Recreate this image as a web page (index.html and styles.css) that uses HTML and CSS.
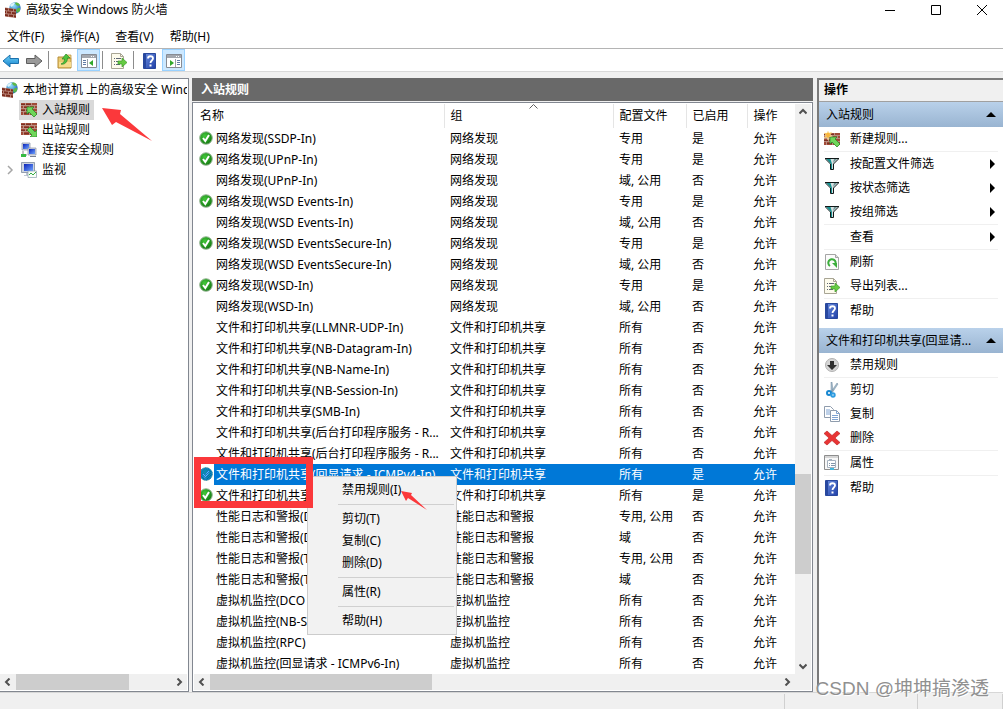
FILE: index.html
```html
<!DOCTYPE html>
<html lang="zh-CN">
<head>
<meta charset="utf-8">
<title>高级安全 Windows 防火墙</title>
<link rel="stylesheet" href="styles.css">
</head>
<body>
<svg class="defs" aria-hidden="true">
  <defs>
    <linearGradient id="g-blue" x1="0" y1="0" x2="0" y2="1"><stop offset="0" stop-color="#6fd0f5"/><stop offset="1" stop-color="#1583cf"/></linearGradient>
    <linearGradient id="g-help" x1="0" y1="0" x2="1" y2="1"><stop offset="0" stop-color="#6d90e0"/><stop offset="1" stop-color="#1f3fa8"/></linearGradient>
    <radialGradient id="g-green" cx=".4" cy=".35" r=".7"><stop offset="0" stop-color="#43c83a"/><stop offset="1" stop-color="#11750f"/></radialGradient>
    <radialGradient id="g-globe" cx=".4" cy=".3" r=".8"><stop offset="0" stop-color="#8fe0fb"/><stop offset="1" stop-color="#0b4fa5"/></radialGradient>
    <linearGradient id="g-screen" x1="0" y1="0" x2="1" y2="1"><stop offset="0" stop-color="#0a22b8"/><stop offset="1" stop-color="#6fa4ff"/></linearGradient>
    <symbol id="bricks" viewBox="0 0 16 12">
      <path fill="#b98d80" d="M0 0h16v12H0z"/>
      <path fill="#a04a38" d="M0 0h4v2H0zM5 0h5v2H5zM11 0h5v2h-5zM0 3h2v2H0zM3 3h5v2H3zM9 3h4v2H9zM14 3h2v2h-2zM0 6h4v2H0zM5 6h5v2H5zM11 6h5v2h-5zM0 9h2v3H0zM3 9h5v3H3zM9 9h4v3H9zM14 9h2v3h-2z"/>
      <path fill="#7d3023" d="M0 1h4v1H0zM5 1h5v1H5zM3 4h5v1H3zM9 4h4v1H9zM0 7h4v1H0zM5 7h5v1H5zM3 10h5v1H3z"/>
    </symbol>
    <symbol id="firewall" viewBox="0 0 16 16">
      <circle cx="10" cy="6" r="5.700" fill="url(#g-globe)"/>
      <path d="M10 1c2-1 4 0 5 2l-2 1-2-1zM13 6l2 0 0 3-3 2-1-3z" fill="#5cb848"/>
      <path d="M5 3l3-2 2 0-2 3-2 1z" fill="#dff5fb"/>
      <path fill="#b58074" d="M0 5.500l11 1.500v9L0 14.500z"/>
      <path fill="#7c2d1e" d="M0 6l3 .4v2L0 8zM4 6.500l4 .5v2l-4-.5zM9 7.200l2 .2v2l-2-.2zM0 9l1 .1v2L0 11zM2 9.200l4 .6v2l-4-.6zM7 10l4 .5v2L7 12zM0 12l3 .4v2L0 14zM4 12.500l4 .5v2l-4-.5zM9 13.200l2 .3v2l-2-.3z"/>
    </symbol>
    <symbol id="inbound" viewBox="0 0 16 14">
      <use href="#bricks" width="16" height="12"/>
      <path d="M6 4h7l-2 2 5 5-3 3-5-5-2 2z" fill="#6fd65a" stroke="#2f8c2d" stroke-width=".8"/>
    </symbol>
    <symbol id="outbound" viewBox="0 0 16 14">
      <use href="#bricks" width="16" height="12"/>
      <path d="M16 14H9l2-2-5-5 3-3 5 5 2-2z" fill="#6fd65a" stroke="#2f8c2d" stroke-width=".8"/>
    </symbol>
    <symbol id="newrule" viewBox="0 0 16 16">
      <svg y="2" width="16" height="14"><use href="#inbound"/></svg>
      <path d="M4 0l1 2 3-1-2 3 2 1-3 1-1 3-1-3-3 1 2-3-2-2 3 0z" fill="#f8b63c" stroke="#fff3c0" stroke-width=".5"/>
    </symbol>
    <symbol id="computers" viewBox="0 0 16 16">
      <path d="M1 1h8v7H1z" fill="#d4d8e2" stroke="#8790a3" stroke-width=".7"/><path d="M2 2h6v5H2z" fill="url(#g-screen)"/>
      <path d="M7 6h8v7H7z" fill="#d4d8e2" stroke="#8790a3" stroke-width=".7"/><path d="M8 7h6v5H8z" fill="url(#g-screen)"/>
      <path d="M9 14h6v1H9z" fill="#777f8e"/><path d="M2 9v4h4" stroke="#888" fill="none"/><path d="M0 12h5v3H0z" fill="#36bb42"/>
    </symbol>
    <symbol id="monitor" viewBox="0 0 16 16">
      <path d="M.5.5h13v10H.5z" fill="#cdd3df" stroke="#7e8ba0" stroke-width=".8"/><path d="M3 2h9v7H3z" fill="url(#g-screen)"/>
      <path d="M5 11h4v2h2v1H3v-1h2z" fill="#bfc7d3"/><path d="M7 9h8.500v6.500H7z" fill="#f7fff7" stroke="#8fa1b0" stroke-width=".7"/>
      <path d="M8 13l2-2 2 2 3-3" fill="none" stroke="#35a943"/>
    </symbol>
    <symbol id="check" viewBox="0 0 14 14">
      <circle cx="7" cy="7" r="6.300" fill="url(#g-green)" stroke="#9db99b" stroke-width="1"/>
      <path d="M4 7l2.300 3L10 4" fill="none" stroke="#fff" stroke-width="2"/>
    </symbol>
    <pattern id="p-dots" width="2" height="2" patternUnits="userSpaceOnUse"><path d="M0 0h1v1H0zM1 1h1v1H1z" fill="#0078d7"/></pattern>
    <symbol id="check-picked" viewBox="0 0 14 14">
      <use href="#check"/>
      <circle cx="7" cy="7" r="6.500" fill="#0078d7" opacity=".55"/>
      <circle cx="7" cy="7" r="6.500" fill="url(#p-dots)"/>
    </symbol>
    <symbol id="arrow" viewBox="0 0 18 14">
      <path d="M1 7l7-6v3.500h8.500v5H8V13z"/>
    </symbol>
    <symbol id="folder" viewBox="0 0 16 16">
      <path d="M1 4h6l1 1h6v10H1z" fill="#e8c96f" stroke="#b68c37"/><path d="M2 9h12v5H2z" fill="#f8dc8c"/><path d="M9 2h5v3H9z" fill="#f8dc8c" stroke="#b68c37" stroke-width=".7"/>
      <path d="M4 11c3-1 3.500-3 3.500-5H5l4-5 4 4h-2.500c0 4-3 7-6.500 6z" fill="#4fc43c" stroke="#2c8727" stroke-width=".7"/>
    </symbol>
    <symbol id="pane-left" viewBox="0 0 16 14">
      <path d="M.5.5h15v13H.5z" fill="#fff" stroke="#878b93"/><path d="M1 1h14v3H1z" fill="#a3a7ae"/><path d="M10 2h1v1h-1zM12 2h1v1h-1z" fill="#fff"/>
      <path d="M6.500 5v8" stroke="#9ba0a8"/><path d="M2 6h3v1H2zM2 8h3v1H2zM2 10h3v1H2z" fill="#607ca5"/><path d="M12 6v6L8 9z" fill="#31a82c"/>
    </symbol>
    <symbol id="pane-right" viewBox="0 0 16 14">
      <path d="M.5.5h15v13H.5z" fill="#fff" stroke="#878b93"/><path d="M1 1h14v3H1z" fill="#a3a7ae"/><path d="M10 2h1v1h-1zM12 2h1v1h-1z" fill="#fff"/>
      <path d="M9.500 5v8" stroke="#9ba0a8"/><path d="M11 6h3v1h-3zM11 8h3v1h-3zM11 10h3v1h-3z" fill="#607ca5"/><path d="M4 6v6l4-3z" fill="#31a82c"/>
    </symbol>
    <symbol id="export" viewBox="0 0 16 16">
      <path d="M.5.5h9l3 3v12H.5z" fill="#fdfbec" stroke="#a8a594"/><path d="M9.500.5v3h3" fill="none" stroke="#a8a594"/>
      <path d="M3 5h1v1H3zM5 5h5v1H5zM3 8h1v1H3zM5 8h3v1H5zM3 11h1v1H3zM5 11h4v1H5z" fill="#5e6674"/>
      <path d="M7 8h4V5l5 4.500-5 4.500v-3H7z" fill="#66cb42" stroke="#3c9c2a" stroke-width=".7"/>
    </symbol>
    <symbol id="help" viewBox="0 0 14 16">
      <path d="M.5.5h12v15H.5z" fill="url(#g-help)" stroke="#29489d"/><path d="M1 1h2v14H1z" fill="#2848a0"/>
      <path d="M5 5.500c0-3 5-3 5 0 0 2-2.500 2-2.500 4.500" fill="none" stroke="#fff" stroke-width="1.800"/><path d="M6.500 11.500h2v2h-2z" fill="#fff"/>
    </symbol>
    <symbol id="funnel" viewBox="0 0 14 12">
      <path d="M0 .5h14L8.500 6v5.500h-3V6z" fill="#d7dfe0" stroke="#101818"/><path d="M1.500 1h4L7 6v5H6V6z" fill="#159090"/><path d="M9 1h3L8 5z" fill="#6f9797"/>
    </symbol>
    <symbol id="refresh" viewBox="0 0 14 16">
      <path d="M.5.5h10l3 3v12H.5z" fill="#fbfbfb" stroke="#a5a5a5"/><path d="M10.500.5v3h3" fill="#ddd" stroke="#a5a5a5"/>
      <path d="M5 12a3.700 3.700 0 1 1 5-1" fill="none" stroke="#3cae3c" stroke-width="2"/><path d="M7 9h5v5z" fill="#3cae3c"/>
    </symbol>
    <symbol id="disable" viewBox="0 0 14 14">
      <circle cx="7" cy="7" r="6.500" fill="#d5d5d5" stroke="#b2b2b2"/><path d="M5 3h4v4h3l-5 5-5-5h3z" fill="#303030"/>
    </symbol>
    <symbol id="cut" viewBox="0 0 16 16">
      <path d="M7 0l1 0 1 9-2 1zM13 1l1 1-6 9-1-1z" fill="#a5bccb" stroke="#708ba0" stroke-width=".5"/>
      <circle cx="5" cy="11" r="2" fill="none" stroke="#1787d0" stroke-width="2"/><circle cx="9" cy="13" r="1.700" fill="none" stroke="#2f9ce0" stroke-width="2"/>
    </symbol>
    <symbol id="copy" viewBox="0 0 16 16">
      <path d="M.5.5h6l3 3v8h-9z" fill="#fff" stroke="#8f9cad"/><path d="M2 4h4M2 6h5M2 8h5" stroke="#7fa3d2"/>
      <path d="M6.500 4.500h6l3 3v8h-9z" fill="#fff" stroke="#8f9cad"/><path d="M12.500 4.500v3h3M8 9.500h6M8 11.500h6M8 13.500h6" fill="none" stroke="#7fa3d2"/>
    </symbol>
    <symbol id="delete" viewBox="0 0 16 14">
      <path d="M3 0l5 4.500L13 0l3 2.500L11 7l5 4.500-3 2.500-5-4.500L3 14l-3-2.500L5 7 0 2.500z" fill="#e83434" stroke="#b81f1f" stroke-width=".6"/>
    </symbol>
    <symbol id="props" viewBox="0 0 16 16">
      <path d="M.5.5h14v14H.5z" fill="#f8f8f8" stroke="#8d8d8d"/><path d="M1 1h13v2H1z" fill="#d5d5d5"/><path d="M3.500 5.500h8v7h-8z" fill="#fff" stroke="#a6b2bf"/>
      <path d="M5 4h3v2H5z" fill="#a6b2bf"/><path d="M5 8h1v1H5zM7 8h4v1H7zM5 10h1v1H5zM7 10h4v1H7z" fill="#8396aa"/><path d="M6 13h4v2H6z" fill="#44b7dd"/>
    </symbol>
    <symbol id="chev" viewBox="0 0 8 8"><path d="M5.500 .5L2 4l3.500 3.500" fill="none" stroke="#505050" stroke-width="2"/></symbol>
  </defs>
</svg>

<div class="window">
  <header class="titlebar">
    <svg class="i16"><use href="#firewall"/></svg>
    <h1>高级安全 Windows 防火墙</h1>
    <div class="winbtns">
      <button type="button" aria-label="最小化"><svg viewBox="0 0 12 12"><path d="M1 6.500h10" stroke="#000"/></svg></button>
      <button type="button" aria-label="最大化"><svg viewBox="0 0 12 12"><path d="M1.500 1.500h9v9h-9z" fill="none" stroke="#000"/></svg></button>
      <button type="button" aria-label="关闭"><svg viewBox="0 0 12 12"><path d="M1 1l10 10M11 1L1 11" stroke="#000"/></svg></button>
    </div>
  </header>
  <nav class="menubar">
    <button type="button">文件(F)</button><button type="button">操作(A)</button><button type="button">查看(V)</button><button type="button">帮助(H)</button>
  </nav>
  <div class="toolbar" role="toolbar">
    <button type="button" class="tool" aria-label="后退"><svg class="i-arrow back"><use href="#arrow"/></svg></button>
    <button type="button" class="tool" aria-label="前进"><svg class="i-arrow fwd"><use href="#arrow"/></svg></button>
    <span class="tsep"></span>
    <button type="button" class="tool" aria-label="上一级"><svg class="i16"><use href="#folder"/></svg></button>
    <button type="button" class="tool on" aria-label="控制台树"><svg class="i-pane"><use href="#pane-left"/></svg></button>
    <span class="tsep"></span>
    <button type="button" class="tool" aria-label="导出列表"><svg class="i16"><use href="#export"/></svg></button>
    <span class="tsep"></span>
    <button type="button" class="tool" aria-label="帮助"><svg class="i16"><use href="#help"/></svg></button>
    <button type="button" class="tool on" aria-label="操作窗格"><svg class="i-pane"><use href="#pane-right"/></svg></button>
  </div>

  <main class="panes">
    <section class="tree">
      <ul>
        <li class="root"><svg class="i16"><use href="#firewall"/></svg><span>本地计算机 上的高级安全 Windows</span></li>
        <li><span class="twist"></span><a href="#in" class="sel"><svg class="i-wall"><use href="#inbound"/></svg>入站规则</a></li>
        <li><span class="twist"></span><a href="#out"><svg class="i-wall"><use href="#outbound"/></svg>出站规则</a></li>
        <li><span class="twist"></span><a href="#conn"><svg class="i16"><use href="#computers"/></svg>连接安全规则</a></li>
        <li><span class="twist"><svg class="chev-r" viewBox="0 0 8 10"><path d="M2 1l4 4-4 4" fill="none" stroke="#a6a6a6" stroke-width="1.500"/></svg></span><a href="#mon"><svg class="i16"><use href="#monitor"/></svg>监视</a></li>
      </ul>
      <div class="hscroll"><button type="button" aria-label="左"><svg class="chev"><use href="#chev"/></svg></button><span class="track"><span class="thumb t-tree"></span></span><button type="button" aria-label="右"><svg class="chev right"><use href="#chev"/></svg></button></div>
      <svg class="mark-arrow" viewBox="0 0 50 34"><path d="M0 1l19 2-1 4 32 27L14 15l-4 3z"/></svg>
    </section>

    <section class="rules">
      <h2>入站规则</h2>
      <div class="list">
        <div class="grid">
          <div class="view">
            <table>
              <colgroup><col class="c1"><col class="c2"><col class="c3"><col class="c4"><col class="c5"></colgroup>
              <thead><tr><th>名称</th><th>组<svg class="sort" viewBox="0 0 9 5"><path d="M.5 4.500l4-4 4 4" fill="none" stroke="#606060"/></svg></th><th>配置文件</th><th>已启用</th><th>操作</th></tr></thead>
              <tbody>
                <tr><td><svg class="ok"><use href="#check"/></svg>网络发现(SSDP-In)</td><td>网络发现</td><td>专用</td><td>是</td><td>允许</td></tr>
                <tr><td><svg class="ok"><use href="#check"/></svg>网络发现(UPnP-In)</td><td>网络发现</td><td>专用</td><td>是</td><td>允许</td></tr>
                <tr><td><i></i>网络发现(UPnP-In)</td><td>网络发现</td><td>域, 公用</td><td>否</td><td>允许</td></tr>
                <tr><td><svg class="ok"><use href="#check"/></svg>网络发现(WSD Events-In)</td><td>网络发现</td><td>专用</td><td>是</td><td>允许</td></tr>
                <tr><td><i></i>网络发现(WSD Events-In)</td><td>网络发现</td><td>域, 公用</td><td>否</td><td>允许</td></tr>
                <tr><td><svg class="ok"><use href="#check"/></svg>网络发现(WSD EventsSecure-In)</td><td>网络发现</td><td>专用</td><td>是</td><td>允许</td></tr>
                <tr><td><i></i>网络发现(WSD EventsSecure-In)</td><td>网络发现</td><td>域, 公用</td><td>否</td><td>允许</td></tr>
                <tr><td><svg class="ok"><use href="#check"/></svg>网络发现(WSD-In)</td><td>网络发现</td><td>专用</td><td>是</td><td>允许</td></tr>
                <tr><td><i></i>网络发现(WSD-In)</td><td>网络发现</td><td>域, 公用</td><td>否</td><td>允许</td></tr>
                <tr><td><i></i>文件和打印机共享(LLMNR-UDP-In)</td><td>文件和打印机共享</td><td>所有</td><td>否</td><td>允许</td></tr>
                <tr><td><i></i>文件和打印机共享(NB-Datagram-In)</td><td>文件和打印机共享</td><td>所有</td><td>否</td><td>允许</td></tr>
                <tr><td><i></i>文件和打印机共享(NB-Name-In)</td><td>文件和打印机共享</td><td>所有</td><td>否</td><td>允许</td></tr>
                <tr><td><i></i>文件和打印机共享(NB-Session-In)</td><td>文件和打印机共享</td><td>所有</td><td>否</td><td>允许</td></tr>
                <tr><td><i></i>文件和打印机共享(SMB-In)</td><td>文件和打印机共享</td><td>所有</td><td>否</td><td>允许</td></tr>
                <tr><td><i></i>文件和打印机共享(后台打印程序服务 - R...</td><td>文件和打印机共享</td><td>所有</td><td>否</td><td>允许</td></tr>
                <tr><td><i></i>文件和打印机共享(后台打印程序服务 - R...</td><td>文件和打印机共享</td><td>所有</td><td>否</td><td>允许</td></tr>
                <tr class="picked"><td><svg class="ok"><use href="#check-picked"/></svg>文件和打印机共享(回显请求 - ICMPv4-In)</td><td>文件和打印机共享</td><td>所有</td><td>是</td><td>允许</td></tr>
                <tr><td><svg class="ok"><use href="#check"/></svg>文件和打印机共享</td><td>文件和打印机共享</td><td>所有</td><td>是</td><td>允许</td></tr>
                <tr><td><i></i>性能日志和警报(D</td><td>性能日志和警报</td><td>专用, 公用</td><td>否</td><td>允许</td></tr>
                <tr><td><i></i>性能日志和警报(D</td><td>性能日志和警报</td><td>域</td><td>否</td><td>允许</td></tr>
                <tr><td><i></i>性能日志和警报(T</td><td>性能日志和警报</td><td>专用, 公用</td><td>否</td><td>允许</td></tr>
                <tr><td><i></i>性能日志和警报(T</td><td>性能日志和警报</td><td>域</td><td>否</td><td>允许</td></tr>
                <tr><td><i></i>虚拟机监控(DCO</td><td>虚拟机监控</td><td>所有</td><td>否</td><td>允许</td></tr>
                <tr><td><i></i>虚拟机监控(NB-S</td><td>虚拟机监控</td><td>所有</td><td>否</td><td>允许</td></tr>
                <tr><td><i></i>虚拟机监控(RPC)</td><td>虚拟机监控</td><td>所有</td><td>否</td><td>允许</td></tr>
                <tr><td><i></i>虚拟机监控(回显请求 - ICMPv6-In)</td><td>虚拟机监控</td><td>所有</td><td>否</td><td>允许</td></tr>
              </tbody>
            </table>
          </div>
          <div class="vscroll"><button type="button" aria-label="上"><svg class="chev up"><use href="#chev"/></svg></button><span class="vtrack"><span class="vthumb"></span></span><button type="button" aria-label="下"><svg class="chev down"><use href="#chev"/></svg></button></div>
        </div>
        <div class="hscroll mid"><button type="button" aria-label="左"><svg class="chev"><use href="#chev"/></svg></button><span class="track"><span class="thumb t-list"></span></span><button type="button" aria-label="右"><svg class="chev right"><use href="#chev"/></svg></button></div>

        <div class="context" role="menu">
          <button type="button" role="menuitem">禁用规则(I)</button>
          <hr>
          <button type="button" role="menuitem">剪切(T)</button>
          <button type="button" role="menuitem">复制(C)</button>
          <button type="button" role="menuitem">删除(D)</button>
          <hr>
          <button type="button" role="menuitem">属性(R)</button>
          <hr>
          <button type="button" role="menuitem">帮助(H)</button>
        </div>
        <div class="mark-box"></div>
        <svg class="mark-arrow small" viewBox="0 0 26 20"><path d="M0 0l11 2-1 2 16 15L7 7 5 10z"/></svg>
      </div>
    </section>

    <aside class="actions">
      <h2>操作</h2>
      <h3>入站规则<span class="tri-up"></span></h3>
      <div class="group">
        <button type="button"><span class="ic"><svg class="i16"><use href="#newrule"/></svg></span>新建规则...</button>
        <hr>
        <button type="button"><span class="ic"><svg class="i-funnel"><use href="#funnel"/></svg></span>按配置文件筛选<span class="tri-r"></span></button>
        <button type="button"><span class="ic"><svg class="i-funnel"><use href="#funnel"/></svg></span>按状态筛选<span class="tri-r"></span></button>
        <button type="button"><span class="ic"><svg class="i-funnel"><use href="#funnel"/></svg></span>按组筛选<span class="tri-r"></span></button>
        <hr>
        <button type="button"><span class="ic"></span>查看<span class="tri-r"></span></button>
        <hr>
        <button type="button"><span class="ic"><svg class="i16"><use href="#refresh"/></svg></span>刷新</button>
        <button type="button"><span class="ic"><svg class="i16"><use href="#export"/></svg></span>导出列表...</button>
        <hr>
        <button type="button"><span class="ic"><svg class="i16"><use href="#help"/></svg></span>帮助</button>
      </div>
      <h3>文件和打印机共享(回显请...<span class="tri-up"></span></h3>
      <div class="group">
        <button type="button"><span class="ic"><svg class="ok"><use href="#disable"/></svg></span>禁用规则</button>
        <hr>
        <button type="button"><span class="ic"><svg class="i16"><use href="#cut"/></svg></span>剪切</button>
        <button type="button"><span class="ic"><svg class="i16"><use href="#copy"/></svg></span>复制</button>
        <button type="button"><span class="ic"><svg class="i16"><use href="#delete"/></svg></span>删除</button>
        <hr>
        <button type="button"><span class="ic"><svg class="i16"><use href="#props"/></svg></span>属性</button>
        <hr>
        <button type="button"><span class="ic"><svg class="i16"><use href="#help"/></svg></span>帮助</button>
      </div>
    </aside>
  </main>
  <footer class="status"><span></span><span></span><span></span></footer>
  <p class="watermark">CSDN @坤坤搞渗透</p>
</div>
</body>
</html>
```
FILE: styles.css
```css
* { box-sizing: border-box; }
body, h1, h2, h3, ul, p { margin: 0; padding: 0; }
body {
  font: 12px/20px "Noto Sans", "Noto Sans CJK SC", sans-serif;
  color: #000;
  background: #f0f0f0;
}
button {
  font: inherit;
  color: inherit;
  border: 0;
  padding: 0;
  background: none;
  text-align: left;
  white-space: nowrap;
}
a { color: inherit; text-decoration: none; }
svg { flex: none; display: block; }
.defs { position: absolute; width: 0; height: 0; }
.i16 { width: 16px; height: 16px; }
.i-wall, .i-pane { width: 16px; height: 14px; }
.i-arrow { width: 18px; height: 14px; }
.i-funnel { width: 14px; height: 12px; }
.ok { width: 14px; height: 14px; }

.window { position: relative; height: 100vh; display: flex; flex-direction: column; overflow: hidden; }

.titlebar { display: flex; align-items: center; height: 20px; gap: 5px; padding: 0 15px 0 5px; background: #fff; }
.titlebar h1 { font-size: 12px; font-weight: 400; }
.winbtns { display: flex; gap: 34px; margin-left: auto; }
.winbtns svg { width: 12px; height: 12px; }

.menubar { display: flex; height: 28px; padding: 6px 0 0 7px; gap: 16px; background: #fff; }
.toolbar {
  display: flex;
  align-items: center;
  height: 24px;
  border-top: 1px solid #b4b4b4;
  border-bottom: 1px solid #d9d9d9;
  background: #fff;
}
.tool { width: 23px; height: 22px; padding: 2px 2px 0 0; display: flex; align-items: center; justify-content: center; }
.tool.on { padding: 2px 0 0; background: #cce8ff; border: 1px solid #99d1ff; }
.tsep { width: 1px; height: 18px; margin: 0 5px 0 2px; background: #8c8c8c; }
.back { fill: url(#g-blue); stroke: #1b71ad; }
.fwd { fill: #9a9a9a; stroke: #5e5e5e; transform: scaleX(-1); }

.panes { flex: 1; min-height: 0; display: flex; padding-top: 6px; }

.tree {
  position: relative;
  width: 189px;
  flex: none;
  display: flex;
  flex-direction: column;
  background: #fff;
  border: 1px solid #828790;
  border-width: 1px 1px 1px 0;
  padding: 1px 1px 1px 0;
}
.tree ul { flex: 1; list-style: none; overflow: hidden; }
.tree li { display: flex; height: 20px; white-space: nowrap; }
.root { align-items: center; gap: 5px; padding-left: 2px; }
.tree a { display: flex; align-items: center; gap: 5px; padding: 0 4px 0 2px; }
.tree .sel { background: #d9d9d9; }
.twist { width: 19px; display: flex; align-items: center; padding-left: 6px; }
.chev-r { width: 8px; height: 10px; }

.hscroll { display: flex; height: 16px; background: #f0f0f0; }
.hscroll button, .vscroll button { width: 16px; height: 16px; display: flex; align-items: center; justify-content: center; }
.track { flex: 1; display: flex; }
.thumb { background: #cdcdcd; }
.t-tree { width: 73%; }
.t-list { width: 39%; }
.chev { width: 8px; height: 8px; }
.chev.right { transform: rotate(180deg); }
.chev.up { transform: rotate(90deg); }
.chev.down { transform: rotate(-90deg); }

.rules { flex: 1; min-width: 0; display: flex; flex-direction: column; margin: 0 4px 0 3px; }
.rules h2 { height: 23px; padding-left: 9px; font-size: 12px; line-height: 23px; color: #fff; background: #696969; }
.list {
  position: relative;
  flex: 1;
  min-height: 0;
  display: flex;
  flex-direction: column;
  margin-top: 1px;
  padding: 1px;
  border: 1px solid #828790;
  background: #fff;
}
.grid { flex: 1; min-height: 0; display: flex; }
.view { flex: 1; min-width: 0; overflow: hidden; }
.mid { padding-right: 16px; }
table { width: 100%; border-collapse: collapse; table-layout: fixed; }
.c1 { width: 250px; }
.c3 { width: 73px; }
.c4 { width: 61px; }
.c5 { width: 48px; }
th, td { padding: 0 0 0 6px; font-weight: 400; text-align: left; white-space: nowrap; overflow: hidden; }
th { position: relative; height: 24px; border-right: 1px solid #e5e5e5; }
th:last-child { border-right: 0; }
td { height: 21px; line-height: 21px; }
td:first-child { padding-left: 5px; }
td .ok, td i { display: inline-block; width: 14px; height: 14px; margin-right: 3px; vertical-align: -2px; }
.sort { position: absolute; left: 50%; top: 0; width: 9px; height: 5px; }
.picked td { background: #0078d7; color: #fff; }
.picked td:first-child { background: linear-gradient(90deg, #fff 20px, #0078d7 20px); }

.vscroll { width: 16px; display: flex; flex-direction: column; background: #f0f0f0; }
.vtrack { flex: 1; display: flex; flex-direction: column; padding-top: 354px; }
.vthumb { height: 100px; background: #cdcdcd; }

.context {
  position: absolute;
  left: 114px;
  top: 373px;
  width: 150px;
  padding: 2px;
  border: 1px solid #ccc;
  background: #f2f2f2;
}
.context button { display: block; width: 100%; height: 22px; padding-left: 32px; }
.context hr { height: 1px; margin: 3px 0 3px 28px; border: 0; background: #d0d0d0; }

.mark-box { position: absolute; left: 1px; top: 354px; width: 119px; height: 51px; border: 7px solid #fb383b; }
.mark-arrow { position: absolute; left: 102px; top: 28px; width: 50px; height: 34px; fill: #fb383b; }
.mark-arrow.small { left: 208px; top: 388px; width: 26px; height: 20px; }

.actions { width: 186px; flex: none; border: 2px solid #7a7a7a; border-width: 2px 0 0 2px; background: #fff; }
.actions h2 { height: 22px; padding-left: 5px; font-size: 12px; line-height: 20px; background: #f0f0f0; border-bottom: 1px solid #a0a0a0; }
.actions h3 {
  display: flex;
  align-items: center;
  justify-content: space-between;
  height: 25px;
  padding: 0 7px;
  font-size: 12px;
  font-weight: 400;
  white-space: nowrap;
  background: linear-gradient(#b9d1ea, #99b4d1);
}
.group { padding: 0 5px; margin-bottom: 5px; }
.group button { display: flex; align-items: center; width: 100%; height: 24px; }
.group hr { height: 1px; margin: 0; border: 0; background: #f0f0f0; }
.ic { width: 16px; margin-right: 10px; display: flex; justify-content: center; }
.tri-up { border: 5px solid transparent; border-top: 0; border-bottom-color: #000; }
.tri-r { margin-left: auto; margin-right: 3px; border: 5px solid transparent; border-right: 0; border-left-color: #000; }

.status { display: flex; justify-content: flex-end; height: 17px; border-top: 1px solid #d7d7d7; }
.status span { border-left: 1px solid #d0d0d0; width: 133px; margin-top: 1px; }
.status span:nth-child(2) { width: 85px; }
.status span:nth-child(3) { width: 1px; }
.watermark {
  position: absolute;
  right: 14px;
  bottom: 8px;
  font: 19px/24px "Liberation Sans", "Noto Sans CJK SC", sans-serif;
  color: #909090;
  text-shadow: 1px 1px 0 #fff;
}
```
